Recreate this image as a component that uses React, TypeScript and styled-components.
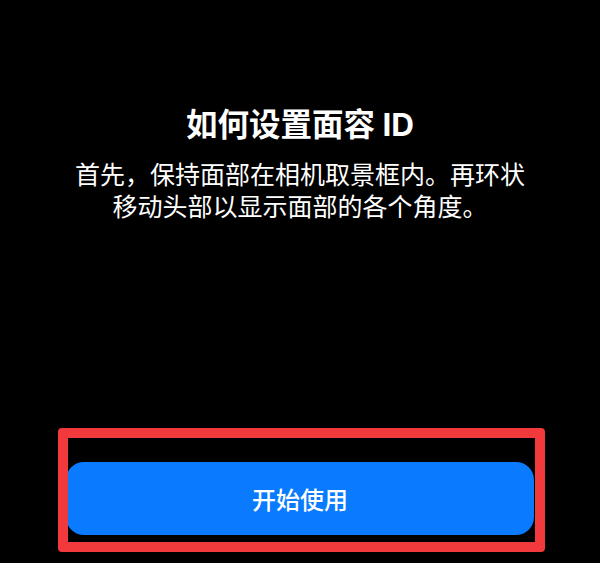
import styled, { createGlobalStyle } from "styled-components";

const GlobalStyle = createGlobalStyle`
  html, body {
    margin: 0;
    padding: 0;
    background: #000;
  }
  * {
    box-sizing: border-box;
  }
`;

const Screen = styled.main`
  display: flex;
  flex-direction: column;
  align-items: center;
  height: 563px;
  padding: 105px 0 28px;
  background: #000;
  color: #fff;
  font-family: Inter, "Noto Sans CJK SC", sans-serif;
`;

const Title = styled.h1`
  margin: 0;
  font-size: 31.5px;
  line-height: 40px;
  font-weight: 700;
  text-align: center;
`;

const Description = styled.p`
  margin: 14px 0 0;
  max-width: 460px;
  font-size: 25px;
  line-height: 32px;
  font-weight: 400;
  text-align: center;
`;

const Footer = styled.div`
  position: relative;
  margin-top: auto;
  width: 468px;
`;

const PrimaryButton = styled.button`
  display: flex;
  align-items: center;
  justify-content: center;
  width: 100%;
  height: 73px;
  border: none;
  border-radius: 18px;
  background: #0a7aff;
  color: #fff;
  font-family: Inter, "Noto Sans CJK SC", sans-serif;
  font-size: 24px;
  font-weight: 500;
  cursor: pointer;
`;

// annotation frame drawn over the button
const Highlight = styled.div`
  position: absolute;
  top: -34px;
  left: -8px;
  right: -11px;
  bottom: -17px;
  border: 10px solid #f23a3c;
  border-radius: 4px;
  pointer-events: none;
`;

export default function App() {
  return (
    <>
      <GlobalStyle />
      <Screen>
        <Title>如何设置面容 ID</Title>
        <Description>
          首先，保持面部在相机取景框内。再环状移动头部以显示面部的各个角度。
        </Description>
        <Footer>
          <PrimaryButton>开始使用</PrimaryButton>
          <Highlight />
        </Footer>
      </Screen>
    </>
  );
}
